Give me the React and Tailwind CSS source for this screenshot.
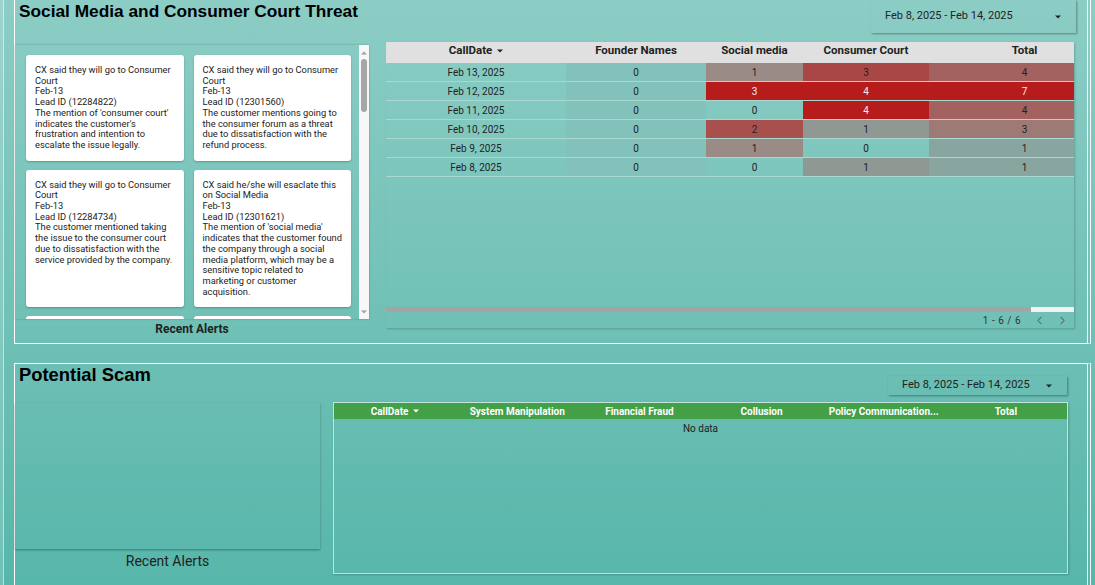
import { ChevronLeft, ChevronRight } from "lucide-react";

// Card text is kept in the wrapped lines shown in the report.
const CARDS = [
  [
    "CX said they will go to Consumer",
    "Court",
    "Feb-13",
    "Lead ID (12284822)",
    "The mention of 'consumer court'",
    "indicates the customer's",
    "frustration and intention to",
    "escalate the issue legally.",
  ],
  [
    "CX said they will go to Consumer",
    "Court",
    "Feb-13",
    "Lead ID (12301560)",
    "The customer mentions going to",
    "the consumer forum as a threat",
    "due to dissatisfaction with the",
    "refund process.",
  ],
  [
    "CX said they will go to Consumer",
    "Court",
    "Feb-13",
    "Lead ID (12284734)",
    "The customer mentioned taking",
    "the issue to the consumer court",
    "due to dissatisfaction with the",
    "service provided by the company.",
  ],
  [
    "CX said he/she will esaclate this",
    "on Social Media",
    "Feb-13",
    "Lead ID (12301621)",
    "The mention of 'social media'",
    "indicates that the customer found",
    "the company through a social",
    "media platform, which may be a",
    "sensitive topic related to",
    "marketing or customer",
    "acquisition.",
  ],
];

// heat colours: [value, background class, light text?]
const ROWS = [
  { date: "Feb 13, 2025", s: [1, "bg-[#9b8b87]"], c: [3, "bg-[#a94646]"], t: [4, "bg-[#a3625f]"] },
  { date: "Feb 12, 2025", s: [3, "bg-[#b71c1c]", true], c: [4, "bg-[#b71c1c]", true], t: [7, "bg-[#b71c1c]", true] },
  { date: "Feb 11, 2025", s: [0, ""], c: [4, "bg-[#b71c1c]", true], t: [4, "bg-[#a3625f]"] },
  { date: "Feb 10, 2025", s: [2, "bg-[#a8504d]"], c: [1, "bg-[#8f9892]"], t: [3, "bg-[#9d7a76]"] },
  { date: "Feb 9, 2025", s: [1, "bg-[#9b8b87]"], c: [0, ""], t: [1, "bg-[#88a69f]"] },
  { date: "Feb 8, 2025", s: [0, ""], c: [1, "bg-[#8f9892]"], t: [1, "bg-[#88a69f]"] },
];

const SCAM_COLS = ["CallDate", "System Manipulation", "Financial Fraud", "Collusion", "Policy Communication...", "Total"];

function Caret({ className = "" }) {
  return (
    <svg width="6" height="4" viewBox="0 0 6 4" className={className}>
      <path d="M0 0.5h6L3 3.5z" fill="currentColor" />
    </svg>
  );
}

function DatePicker({ className }) {
  return (
    <div
      className={`flex items-center justify-between pl-[14px] pr-[15px] text-[11px] text-[#222] shadow-[1px_1px_2px_rgba(0,0,0,0.35)] ${className}`}
    >
      <span>Feb 8, 2025 - Feb 14, 2025</span>
      <Caret className="text-[#222]" />
    </div>
  );
}

function HeatCell({ cell }) {
  const [v, bg, light] = cell;
  return (
    <div className={`flex items-center justify-center ${bg} ${light ? "text-[#eee]" : "text-[#222]"}`}>
      {v}
    </div>
  );
}

function AlertCard({ lines }) {
  return (
    <div className="rounded-[3px] bg-white px-[9px] py-[10px] text-[9.3px] leading-[10.7px] text-[#222] shadow-[0_1px_2px_rgba(0,0,0,0.25)]">
      {lines.map((l, i) => (
        <div key={i} className="whitespace-nowrap">
          {l}
        </div>
      ))}
    </div>
  );
}

function AlertList() {
  return (
    <div className="flex h-[274px] w-[354px] overflow-hidden shadow-[0_0_2px_rgba(0,0,0,0.25)]">
      <div className="grid flex-1 grid-cols-2 content-start gap-x-[10px] gap-y-[9px] pl-[11px] pr-[8px] pt-[10px]">
        {CARDS.map((c, i) => (
          <AlertCard key={i} lines={c} />
        ))}
        <div className="h-[20px] rounded-[3px] bg-white" />
        <div className="h-[20px] rounded-[3px] bg-white" />
      </div>
      <div className="flex w-[10px] flex-col items-center bg-[#f7f7f7] pt-[6px] pb-[5px]">
        <Caret className="rotate-180 text-[#a0a0a0]" />
        <div className="mt-[4px] h-[53px] w-[6px] rounded-[3px] bg-[#a6a6a6]" />
        <div className="flex-1" />
        <Caret className="text-[#a0a0a0]" />
      </div>
    </div>
  );
}

function ThreatTable() {
  return (
    <div className="flex h-[286px] w-[688px] flex-col shadow-[1px_1px_2px_rgba(0,0,0,0.2)]">
      <div className="overflow-hidden">
        <div className="w-[734px] text-[10px]">
          <div className="grid h-[21px] grid-cols-[180px_140px_97px_126px_191px] items-center bg-[#e0e0e0] pb-[4px] text-[11.5px] font-bold text-[#222]">
            <div className="flex items-center justify-center gap-[5px]">
              CallDate <Caret />
            </div>
            <div className="text-center">Founder Names</div>
            <div className="text-center">Social media</div>
            <div className="text-center">Consumer Court</div>
            <div className="text-center">Total</div>
          </div>
          {ROWS.map((r) => (
            <div
              key={r.date}
              className="grid h-[19px] grid-cols-[180px_140px_97px_126px_191px] border-b border-[#a9d8d1]"
            >
              <div className="flex items-center justify-center text-[#222]">{r.date}</div>
              <div className="flex items-center justify-center bg-[#83c2ba] text-[#222]">0</div>
              <HeatCell cell={r.s} />
              <HeatCell cell={r.c} />
              <HeatCell cell={r.t} />
            </div>
          ))}
        </div>
      </div>
      <div className="flex-1" />
      <div className="flex h-[5px]">
        <div className="w-[645px] bg-[#a4a4a4]" />
        <div className="flex-1 bg-[#f2f2f2]" />
      </div>
      <div className="flex h-[16px] items-center justify-end pr-[5px] text-[10px] text-[#333]">
        <span className="tracking-[0.5px]">1 - 6 / 6</span>
        <ChevronLeft size={13} strokeWidth={1.8} className="ml-[12px] text-[#4a4a4a]" />
        <ChevronRight size={13} strokeWidth={1.8} className="ml-[10px] text-[#4a4a4a]" />
      </div>
    </div>
  );
}

function ScamTable() {
  return (
    <div className="flex h-[172px] w-[735px] flex-col border border-white/60 shadow-[1px_1px_2px_rgba(0,0,0,0.2)]">
      <div className="grid h-[16px] grid-cols-6 items-center bg-[#43a047] text-[10px] font-bold text-white">
        {SCAM_COLS.map((c, i) => (
          <div key={c} className="flex items-center justify-center gap-[5px] whitespace-nowrap">
            {c}
            {i === 0 && <Caret />}
          </div>
        ))}
      </div>
      <div className="pt-[2px] text-center text-[10px] text-[#222]">No data</div>
    </div>
  );
}

export default function App() {
  return (
    <div className="flex h-[585px] w-[1095px] overflow-hidden bg-gradient-to-b from-[#8ccdc5] to-[#57b6aa] font-['Roboto',sans-serif]">
      <div className="w-[4px] shrink-0 border-r border-white/50 bg-white/15" />
      <div className="ml-[10px] flex w-[1077px] flex-col">
        {/* Social media / consumer court */}
        <section className="h-[344px] border-b border-l border-r-4 border-white border-r-white/90 [border-right-style:double]">
          <div className="flex h-[41px] items-start justify-between">
            <h1 className="ml-[4px] pt-[1px] font-['Liberation_Sans',Arial,sans-serif] text-[17.3px] font-bold leading-[20px] text-black">
              Social Media and Consumer Court Threat
            </h1>
            <DatePicker className="mr-[11px] h-[33px] w-[205px]" />
          </div>
          <div className="flex items-start">
            <div className="mt-[4px] flex flex-col">
              <AlertList />
              <div className="flex h-[20px] items-center justify-center text-[12px] font-bold text-[#222]">
                Recent Alerts
              </div>
            </div>
            <div className="ml-[17px] mt-[1px]">
              <ThreatTable />
            </div>
          </div>
        </section>

        {/* Potential scam */}
        <section className="mt-[19px] flex-1 border-l border-t border-r-4 border-white border-r-white/90 [border-right-style:double]">
          <div className="flex h-[38px] items-start justify-between">
            <h2 className="ml-[4px] pt-[1px] font-['Liberation_Sans',Arial,sans-serif] text-[18.4px] font-bold leading-[20px] text-black">
              Potential Scam
            </h2>
            <DatePicker className="mr-[20px] mt-[12px] h-[19px] w-[179px]" />
          </div>
          <div className="flex items-start">
            <div className="flex w-[305px] flex-col">
              <div className="mt-[1px] h-[146px] shadow-[0_1px_2px_rgba(0,0,0,0.35)]" />
              <div className="flex h-[24px] items-center justify-center text-[14px] text-[#222]">Recent Alerts</div>
            </div>
            <div className="ml-[13px]">
              <ScamTable />
            </div>
          </div>
        </section>
      </div>
    </div>
  );
}
